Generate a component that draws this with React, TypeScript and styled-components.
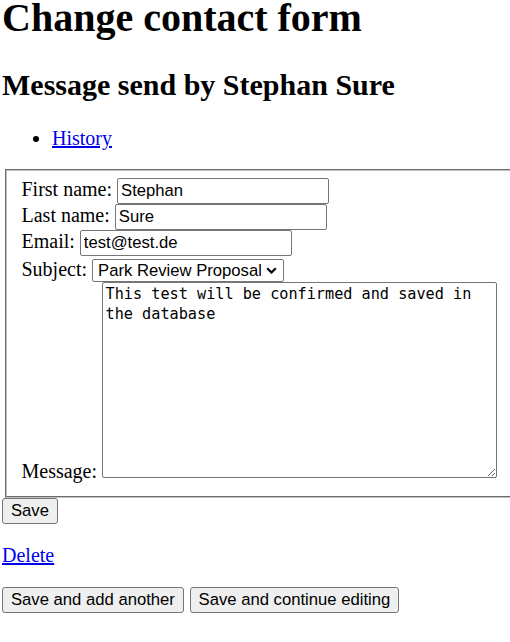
import React from 'react';
import styled, { createGlobalStyle } from 'styled-components';

const GlobalStyle = createGlobalStyle`
    html {
        overflow: hidden;
    }
    body {
        margin: 0;
        padding: 0 0 0 2px;
        background: #ffffff;
        color: #000000;
        font-family: 'Liberation Serif', 'Times New Roman', serif;
        font-size: 20px;
    }
`;

const Title = styled.h1`
    font-size: 40px;
    font-weight: bold;
    margin: -5.6px 0 26.8px;
`;

const SubTitle = styled.h2`
    font-size: 30px;
    font-weight: bold;
    margin: 24.9px 0;
`;

const Links = styled.ul`
    margin: 20px 0 19px;
    padding-left: 50px;
    list-style: disc;
`;

const Link = styled.a`
    color: #0000ee;
    text-decoration: underline;
    cursor: pointer;
`;

const FormBox = styled.fieldset`
    margin: 0 -12px 0 2.5px;
    padding: 7px 15px 13px;
    border: 2px groove #c0c0c0;
    font-size: 20px;
`;

const Row = styled.div`
    white-space: nowrap;
`;

const Label = styled.label`
    font-family: 'Liberation Serif', 'Times New Roman', serif;
    font-size: 20px;
`;

const TextInput = styled.input`
    box-sizing: border-box;
    width: 212px;
    height: 26px;
    padding: 0 3px;
    border: 1px solid #767676;
    border-radius: 2px;
    background: #ffffff;
    color: #000000;
    font-family: 'Liberation Sans', Arial, sans-serif;
    font-size: 16.67px;
`;

const SelectWrap = styled.span`
    position: relative;
    display: inline-block;
    margin-top: 2px;
`;

const Select = styled.select`
    box-sizing: border-box;
    width: 192px;
    height: 22.5px;
    padding: 0 22px 0 5px;
    border: 1px solid #767676;
    border-radius: 2px;
    background: #ffffff;
    color: #000000;
    font-family: 'Liberation Sans', Arial, sans-serif;
    font-size: 16.67px;
    appearance: none;
    -webkit-appearance: none;
`;

const Chevron = styled.svg`
    position: absolute;
    right: 7px;
    top: 50%;
    width: 11px;
    height: 7px;
    margin-top: -3px;
    pointer-events: none;
`;

const MessageArea = styled.textarea`
    box-sizing: border-box;
    width: 394.5px;
    height: 196px;
    margin: 0;
    padding: 2.5px;
    border: 1px solid #767676;
    border-radius: 2px;
    background: #ffffff;
    color: #000000;
    font-family: 'DejaVu Sans Mono', 'Liberation Mono', monospace;
    font-size: 15.2px;
    line-height: 19.3px;
    vertical-align: baseline;
`;

const Button = styled.button`
    box-sizing: border-box;
    height: 26px;
    margin: 0;
    padding: 0 8px;
    border: 1px solid #767676;
    border-radius: 3px;
    background: #efefef;
    color: #000000;
    font-family: 'Liberation Sans', Arial, sans-serif;
    font-size: 16.67px;
`;

const SaveRow = styled.div`
    display: flex;
`;

const DeleteLine = styled.p`
    margin: 20px 0 20.5px;
`;

const ButtonRow = styled.div`
    display: flex;
    gap: 5.7px;
`;

export default function App() {
    return (
        <>
            <GlobalStyle />
            <Title>Change contact form</Title>
            <SubTitle>Message send by Stephan Sure</SubTitle>
            <Links>
                <li>
                    <Link>History</Link>
                </li>
            </Links>
            <form onSubmit={(e) => e.preventDefault()}>
                <FormBox>
                    <Row>
                        <Label htmlFor="first">First name:</Label> <TextInput id="first" defaultValue="Stephan" />
                    </Row>
                    <Row>
                        <Label htmlFor="last">Last name:</Label> <TextInput id="last" defaultValue="Sure" />
                    </Row>
                    <Row>
                        <Label htmlFor="email">Email:</Label> <TextInput id="email" defaultValue="test@test.de" />
                    </Row>
                    <Row>
                        <Label htmlFor="subject">Subject:</Label>{' '}
                        <SelectWrap>
                            <Select id="subject" defaultValue="park">
                                <option value="park">Park Review Proposal</option>
                            </Select>
                            <Chevron viewBox="0 0 11 7" aria-hidden="true">
                                <path d="M1.2 1.2 L5.5 5.5 L9.8 1.2" fill="none" stroke="#000" strokeWidth="2.2" />
                            </Chevron>
                        </SelectWrap>
                    </Row>
                    <Row>
                        <Label htmlFor="message">Message:</Label>{' '}
                        <MessageArea
                            id="message"
                            defaultValue="This test will be confirmed and saved in the database"
                        />
                    </Row>
                </FormBox>
                <SaveRow>
                    <Button type="submit">Save</Button>
                </SaveRow>
                <DeleteLine>
                    <Link>Delete</Link>
                </DeleteLine>
                <ButtonRow>
                    <Button type="button">Save and add another</Button>
                    <Button type="button">Save and continue editing</Button>
                </ButtonRow>
            </form>
        </>
    );
}
